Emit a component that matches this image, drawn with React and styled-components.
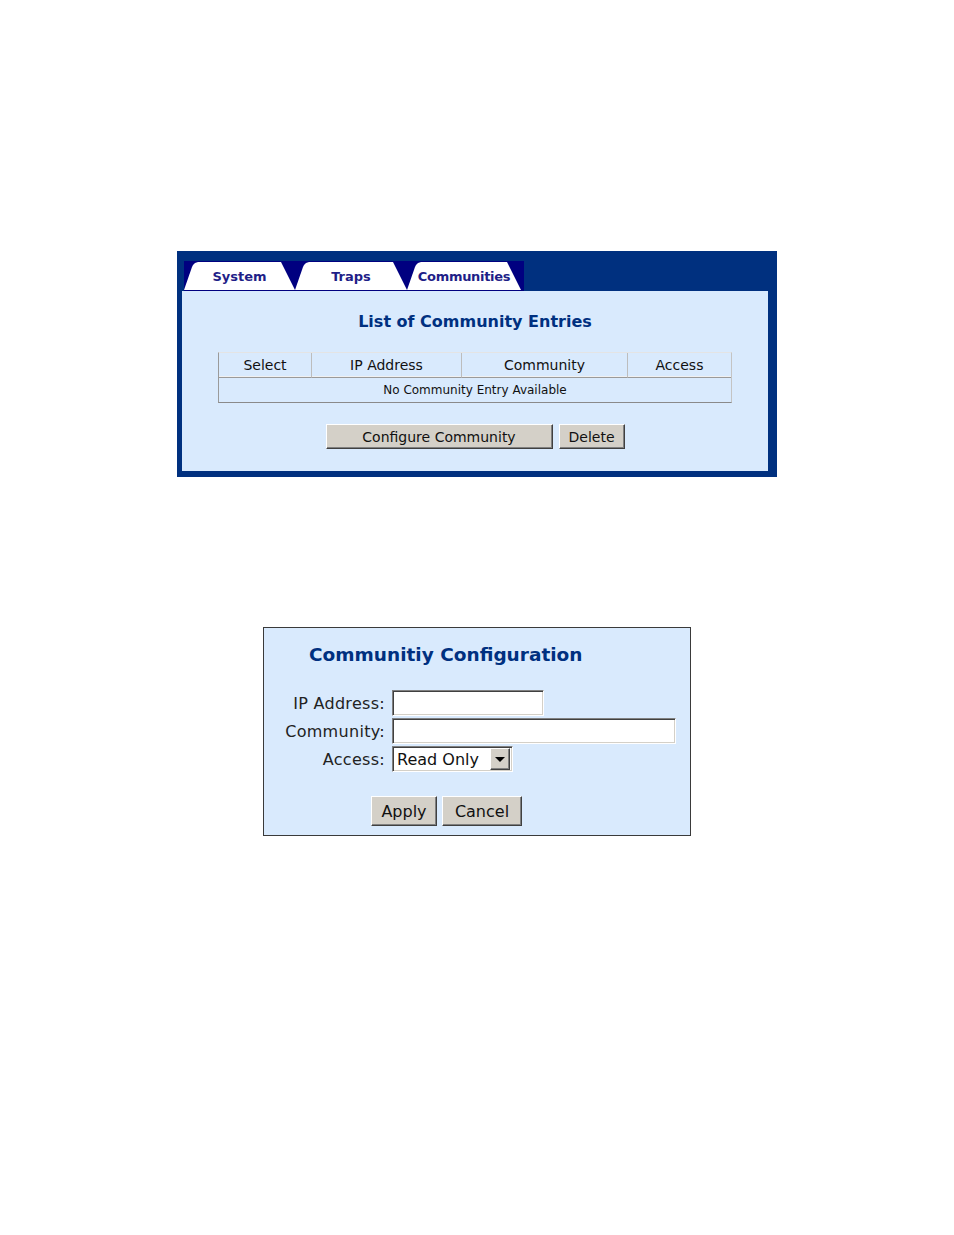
import styled, { createGlobalStyle } from "styled-components"

const Global = createGlobalStyle`
    body {
        margin: 0;
        background: #ffffff;
        font-family: "DejaVu Sans", Verdana, sans-serif;
    }
`

const Page = styled.div`
    width: 954px;
    min-height: 1235px;
    padding-top: 251px;
    box-sizing: border-box;
    display: flex;
    flex-direction: column;
    align-items: center;
    gap: 150px;
`

// top panel: tabs + list of communities
const Frame = styled.div`
    width: 600px;
    box-sizing: border-box;
    background: #00307f;
    padding: 10px 9px 6px 5px;
`
const TabBar = styled.div`
    display: flex;
    width: 340px;
    height: 30px;
    margin-left: 2px;
    background: #000080;
`
const Tab = styled.div`
    width: ${p => p.w}px;
    height: 28px;
    margin-top: 1px;
    background: #ffffff;
    clip-path: polygon(0 100%, 8px 5px, 9px 3px, 11px 1px, 14px 0, calc(100% - 14px) 0, 100% 100%);
    display: flex;
    align-items: center;
    justify-content: center;
    padding-top: 1px;
    box-sizing: border-box;
    font-size: 13px;
    font-weight: bold;
    color: #1f1f88;
    letter-spacing: ${p => p.tight ? "-0.3px" : "0"};
`
const Body = styled.div`
    height: 180px;
    box-sizing: border-box;
    background: #d9eafd;
    padding-top: 21px;
    display: flex;
    flex-direction: column;
    align-items: center;
`
const Title = styled.h1`
    margin: 0;
    font-size: 16px;
    line-height: 19px;
    font-weight: bold;
    color: #003080;
`
const Table = styled.table`
    margin-top: 21px;
    border-collapse: separate;
    border-spacing: 0;
    border-top: 1px solid #e4e4e4;
    border-left: 1px solid #9a9a9a;
    border-bottom: 1px solid #8a8a8a;
    border-right: 1px solid #c4c4c4;
    table-layout: fixed;
`
const Th = styled.th`
    width: ${p => p.w}px;
    height: 24px;
    padding: 0;
    font-weight: normal;
    font-size: 14px;
    color: #111;
    border-right: 1px solid #bdbdbd;
    border-bottom: 1px solid #9a9a9a;
    box-shadow: inset 0 -1px 0 #f0f0f0;
    &:last-child { border-right: none; }
`
const Td = styled.td`
    height: 24px;
    padding: 0;
    text-align: center;
    font-size: 12px;
    color: #111;
`
const ButtonRow = styled.div`
    display: flex;
    gap: ${p => p.gap}px;
    margin-top: ${p => p.top}px;
    margin-left: ${p => p.left || 0}px;
    align-self: ${p => p.left ? "flex-start" : "center"};
`
const Button = styled.button`
    width: ${p => p.w}px;
    height: ${p => p.h}px;
    padding: 0;
    background: #d4d0c8;
    border: 1px solid;
    border-color: #ffffff #404040 #404040 #ffffff;
    box-shadow: inset -1px -1px 0 #808080;
    font-family: "DejaVu Sans", Verdana, sans-serif;
    font-size: ${p => p.fs}px;
    color: #111;
    cursor: pointer;
`

// bottom panel: community configuration form
const Dialog = styled.div`
    width: 428px;
    height: 209px;
    box-sizing: border-box;
    background: #d9eafd;
    border: 1px solid #3a3a3a;
    padding: 16px 0 0 0;
    display: flex;
    flex-direction: column;
`
const DialogTitle = styled.h2`
    margin: 0 0 0 45px;
    font-size: 18.5px;
    line-height: 22px;
    font-weight: bold;
    color: #003080;
`
const Form = styled.div`
    display: grid;
    grid-template-columns: 121px auto;
    column-gap: 7px;
    row-gap: 2px;
    margin-top: 24px;
    align-items: center;
`
const Label = styled.label`
    text-align: right;
    font-size: 16px;
    color: #222;
    letter-spacing: 0.3px;
    white-space: nowrap;
`
const Input = styled.input`
    width: ${p => p.w}px;
    height: 26px;
    box-sizing: border-box;
    margin: 0;
    padding: 0 3px;
    background: #fff;
    border: 1px solid;
    border-color: #808080 #ffffff #ffffff #808080;
    box-shadow: inset 1px 1px 0 #404040, inset -1px -1px 0 #d4d0c8;
    font-family: "DejaVu Sans", Verdana, sans-serif;
    font-size: 16px;
    outline: none;
`
const Select = styled.div`
    width: 121px;
    height: 26px;
    box-sizing: border-box;
    background: #fff;
    border: 1px solid;
    border-color: #808080 #ffffff #ffffff #808080;
    box-shadow: inset 1px 1px 0 #404040, inset -1px -1px 0 #d4d0c8;
    display: flex;
    align-items: center;
    padding: 2px 2px 2px 4px;
    font-size: 16px;
    color: #111;
`
const SelectText = styled.span`
    flex: 1;
`
const Arrow = styled.span`
    width: 20px;
    height: 22px;
    box-sizing: border-box;
    background: #d4d0c8;
    border: 1px solid;
    border-color: #ffffff #404040 #404040 #ffffff;
    box-shadow: inset -1px -1px 0 #808080;
    display: flex;
    align-items: center;
    justify-content: center;
    &::after {
        content: "";
        border-left: 5px solid transparent;
        border-right: 5px solid transparent;
        border-top: 5px solid #000;
    }
`

const App = () => {
    return (
        <>
            <Global />
            <Page>
                <Frame>
                    <TabBar>
                        <Tab w={111}>System</Tab>
                        <Tab w={112}>Traps</Tab>
                        <Tab w={114} tight>Communities</Tab>
                    </TabBar>
                    <Body>
                        <Title>List of Community Entries</Title>
                        <Table>
                            <thead>
                                <tr>
                                    <Th w={92}>Select</Th>
                                    <Th w={149}>IP Address</Th>
                                    <Th w={165}>Community</Th>
                                    <Th w={103}>Access</Th>
                                </tr>
                            </thead>
                            <tbody>
                                <tr>
                                    <Td colSpan={4}>No Community Entry Available</Td>
                                </tr>
                            </tbody>
                        </Table>
                        <ButtonRow gap={6} top={21}>
                            <Button w={227} h={25} fs={14}>Configure Community</Button>
                            <Button w={66} h={25} fs={14}>Delete</Button>
                        </ButtonRow>
                    </Body>
                </Frame>

                <Dialog>
                    <DialogTitle>Communitiy Configuration</DialogTitle>
                    <Form>
                        <Label>IP Address:</Label>
                        <Input w={152} />
                        <Label>Community:</Label>
                        <Input w={284} />
                        <Label>Access:</Label>
                        <Select>
                            <SelectText>Read Only</SelectText>
                            <Arrow />
                        </Select>
                    </Form>
                    <ButtonRow gap={5} top={24} left={107}>
                        <Button w={66} h={30} fs={16}>Apply</Button>
                        <Button w={80} h={30} fs={16}>Cancel</Button>
                    </ButtonRow>
                </Dialog>
            </Page>
        </>
    )
}

export default App
